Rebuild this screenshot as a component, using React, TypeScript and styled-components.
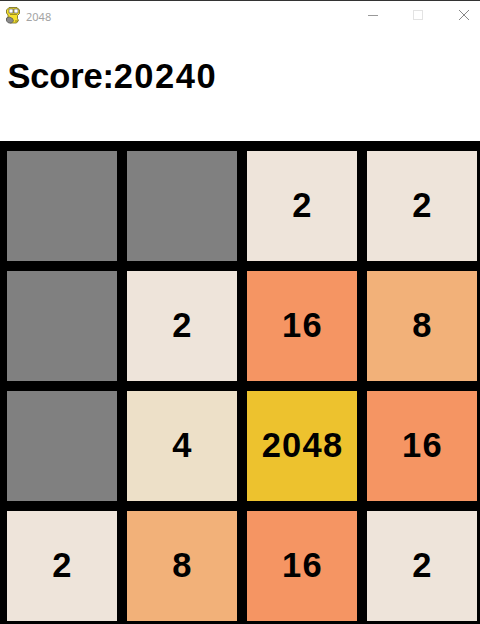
import React from "react";
import styled, { createGlobalStyle } from "styled-components";

const Global = createGlobalStyle`
  html, body { margin: 0; padding: 0; background: #fff; }
  body { width: 480px; height: 624px; overflow: hidden; font-family: "Liberation Sans", Arial, sans-serif; }
`;

const Window = styled.div`
  width: 480px;
  height: 624px;
  display: flex;
  flex-direction: column;
  border-top: 1px solid #333;
  box-sizing: border-box;
`;

const TitleBar = styled.div`
  height: 30px;
  display: flex;
  align-items: center;
  padding: 0 11px 0 6px;
  box-sizing: border-box;
  flex: none;
`;

const AppTitle = styled.span`
  margin-left: 6px;
  font-family: "Noto Sans", sans-serif;
  font-size: 11px;
  color: #a3a3a3;
`;

const WindowButtons = styled.div`
  margin-left: auto;
  margin-bottom: 2px;
  display: flex;
  gap: 35px;
`;

const WindowButton = styled.svg`
  display: block;
  width: 10px;
  height: 10px;
`;

const CloseButton = styled(WindowButton)`
  margin-left: 1px;
`;

const ScoreBar = styled.div`
  height: 110px;
  flex: none;
  padding-left: 7.5px;
  display: flex;
  align-items: center;
  box-sizing: border-box;
  padding-bottom: 20px;
  font-size: 34.5px;
  font-weight: 700;
  letter-spacing: -0.2px;
  color: #000;
`;

const Digits = styled.span`
  letter-spacing: 1.5px;
`;

const Board = styled.div`
  flex: 1;
  background: #000;
  display: grid;
  grid-template-columns: repeat(4, 110px);
  grid-auto-rows: 110px;
  gap: 10px;
  padding: 10px 0 0 7px;
`;

const Tile = styled.div<{ $bg: string }>`
  background: ${(p) => p.$bg};
  display: flex;
  align-items: center;
  justify-content: center;
  padding: 0 0 2px 1px;
  box-sizing: border-box;
  font-size: 34.5px;
  font-weight: 700;
  color: #000;
  letter-spacing: 1.2px;
`;

const colors: Record<number, string> = {
  0: "#808080",
  2: "#eee4da",
  4: "#ede0c8",
  8: "#f2b179",
  16: "#f59563",
  2048: "#edc22e",
};

const grid = [
  [0, 0, 2, 2],
  [0, 2, 16, 8],
  [0, 4, 2048, 16],
  [2, 8, 16, 2],
];

const PygameIcon = () => (
  <svg width="14" height="17" viewBox="0 0 14 17" style={{ marginBottom: 1 }}>
    <path d="M3 0.5h8l2.5 2.5v3.5l-2 2v3l1 2-2 2.5H4l-2-1.5-1.5-2L2 10V8L0.5 6V3z" fill="#f5e02a" stroke="#6b6420" strokeWidth="0.8" />
    <rect x="3" y="2" width="4" height="4" fill="#fff" stroke="#444" strokeWidth="0.6" />
    <rect x="8" y="2" width="4" height="4" fill="#fff" stroke="#444" strokeWidth="0.6" />
    <path d="M4 7.5h7" stroke="#8a7a18" strokeWidth="0.8" />
    <path d="M0.5 11l3-1 3 1.5 1 2.5-2 2H2.5L0.5 14z" fill="#8a8a8a" stroke="#444" strokeWidth="0.6" />
    <path d="M9 14h3" stroke="#6b6420" strokeWidth="0.8" />
  </svg>
);

export default function App() {
  return (
    <>
      <Global />
      <Window>
        <TitleBar>
          <PygameIcon />
          <AppTitle>2048</AppTitle>
          <WindowButtons>
            <WindowButton viewBox="0 0 10 10"><path d="M0 5.5h10" stroke="#999" strokeWidth="1" /></WindowButton>
            <WindowButton viewBox="0 0 10 10"><rect x="0.5" y="0.5" width="9" height="9" fill="none" stroke="#e3e3e3" /></WindowButton>
            <CloseButton viewBox="0 0 10 10"><path d="M0 0l10 10M10 0L0 10" stroke="#888" strokeWidth="1" /></CloseButton>
          </WindowButtons>
        </TitleBar>
        <ScoreBar>
          Score:<Digits>20240</Digits>
        </ScoreBar>
        <Board>
          {grid.flat().map((v, i) => (
            <Tile key={i} $bg={colors[v]}>{v || ""}</Tile>
          ))}
        </Board>
      </Window>
    </>
  );
}
